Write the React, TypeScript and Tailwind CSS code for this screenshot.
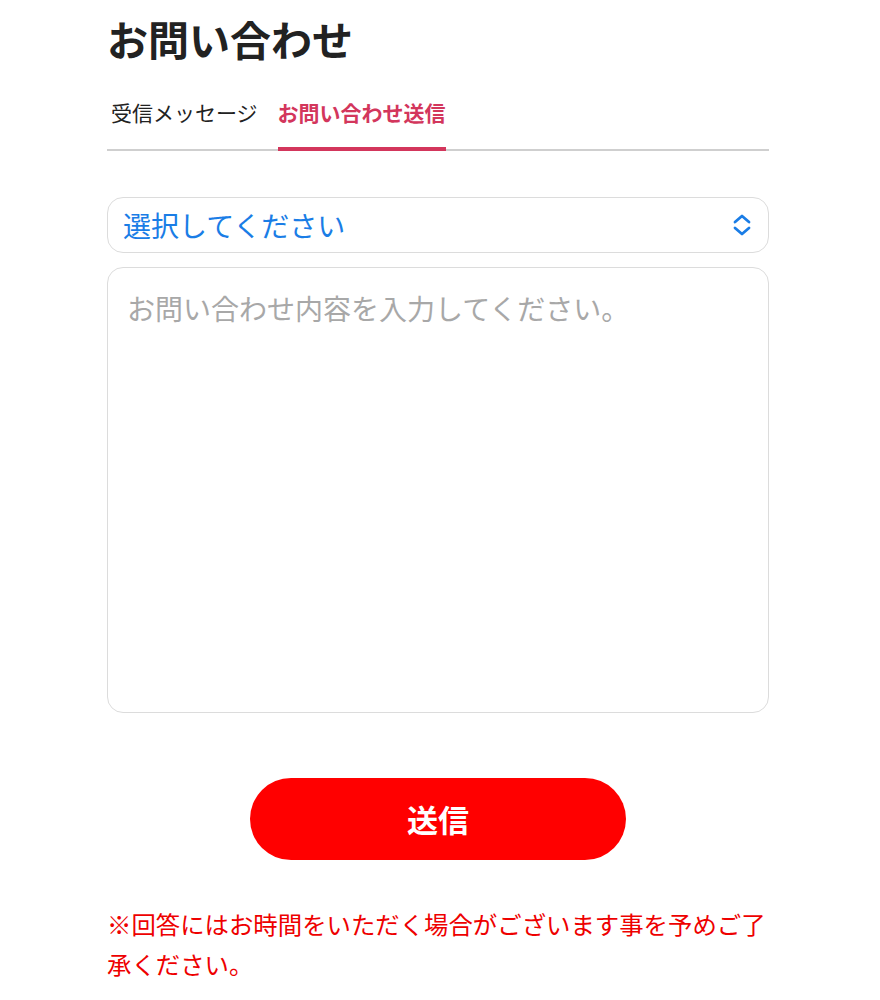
export default function App() {
  return (
    <div className="min-h-[1000px] bg-white font-['Noto_Sans_CJK_JP','Noto_Sans',sans-serif]">
      <div className="ml-[107px] w-[662px] pt-[13px]">
        <h1 className="text-[41px] font-bold leading-[50px] text-[#222]">お問い合わせ</h1>

        <div className="mt-[34px] flex border-b-2 border-[#cfcfcf]">
          <button className="ml-[4px] pb-[22px] text-[21px] leading-[30px] text-[#222]">受信メッセージ</button>
          <button className="relative ml-[20px] pb-[22px] text-[21px] font-bold leading-[30px] text-[#d3365c]">
            お問い合わせ送信
            <span className="absolute -bottom-[2px] left-0 right-0 h-[4px] bg-[#d3365c]" />
          </button>
        </div>

        <div className="mt-[46px] flex h-[56px] items-center justify-between rounded-[16px] border border-[#dcdcdc] pl-[15px] pr-[16px]">
          <span className="text-[28px] leading-[36px] text-[#1a7de6]">選択してください</span>
          <svg width="20" height="24" viewBox="0 0 20 24" fill="none" stroke="#1a7de6" strokeWidth="2.8" strokeLinecap="round" strokeLinejoin="round">
            <path d="M3 9l7-6 7 6" />
            <path d="M3 15l7 6 7-6" />
          </svg>
        </div>

        <div className="mt-[14px] h-[446px] rounded-[16px] border border-[#dcdcdc] px-[19px] pt-[22px]">
          <p className="text-[28px] leading-[36px] text-[#a8a8a8]">お問い合わせ内容を入力してください。</p>
        </div>

        <div className="mt-[65px] flex justify-center">
          <button className="h-[82px] w-[376px] rounded-full bg-[#ff0000] text-[31px] font-bold text-white">送信</button>
        </div>

        <p className="mt-[44px] text-[24.4px] leading-[40px] text-[#ee0000]">
          ※回答にはお時間をいただく場合がございます事を予めご了承ください。
        </p>
      </div>
    </div>
  );
}
